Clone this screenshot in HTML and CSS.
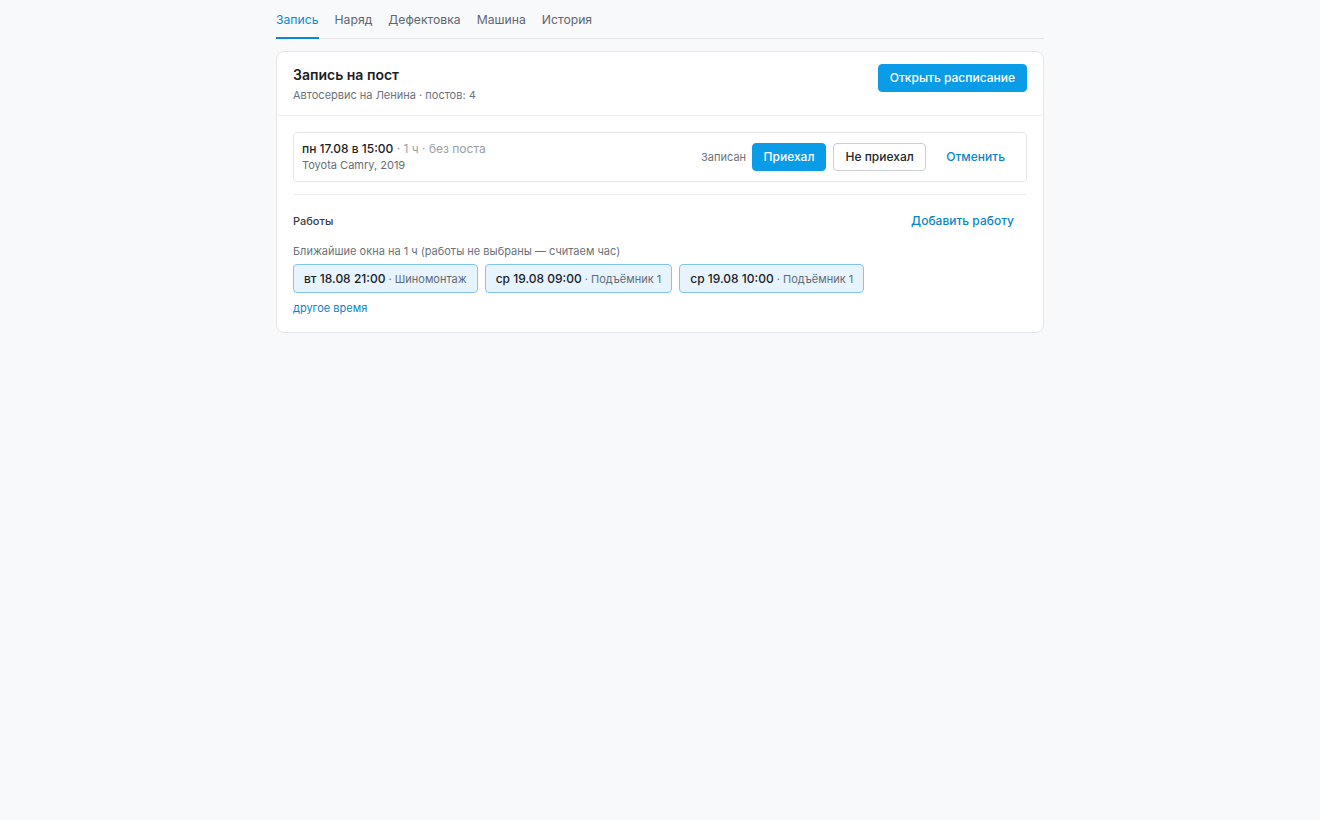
FILE: index.html
```html
<!DOCTYPE html>
<html lang="ru">
<head>
<meta charset="utf-8">
<title>Запись на пост</title>
<link rel="stylesheet" href="styles.css">
</head>
<body>
<div class="page">
  <nav class="tabs">
    <a class="tab active">Запись</a>
    <a class="tab">Наряд</a>
    <a class="tab">Дефектовка</a>
    <a class="tab">Машина</a>
    <a class="tab">История</a>
  </nav>

  <section class="card">
    <header class="card-head">
      <div class="head-text">
        <h1 class="title">Запись на пост</h1>
        <div class="subtitle">Автосервис на Ленина · постов: 4</div>
      </div>
      <button class="btn btn-primary">Открыть расписание</button>
    </header>

    <div class="card-body">
      <div class="booking">
        <div class="booking-info">
          <div class="booking-when"><b>пн 17.08 в 15:00</b><span class="muted"> · 1 ч · без поста</span></div>
          <div class="booking-car">Toyota Camry, 2019</div>
        </div>
        <div class="booking-actions">
          <span class="status">Записан</span>
          <button class="btn btn-primary">Приехал</button>
          <button class="btn btn-outline">Не приехал</button>
          <button class="btn btn-link">Отменить</button>
        </div>
      </div>

      <div class="works">
        <div class="works-head">
          <span class="works-title">Работы</span>
          <button class="btn btn-link">Добавить работу</button>
        </div>
        <div class="hint">Ближайшие окна на 1 ч (работы не выбраны — считаем час)</div>
        <div class="slots">
          <button class="slot"><b>вт 18.08 21:00</b><span class="slot-post"> · Шиномонтаж</span></button>
          <button class="slot"><b>ср 19.08 09:00</b><span class="slot-post"> · Подъёмник 1</span></button>
          <button class="slot"><b>ср 19.08 10:00</b><span class="slot-post"> · Подъёмник 1</span></button>
        </div>
        <a class="other-time">другое время</a>
      </div>
    </div>
  </section>
</div>
</body>
</html>
```

FILE: styles.css
```css
* { box-sizing: border-box; }

html, body {
  margin: 0;
  padding: 0;
  background: #f8f9fb;
  font-family: Inter, "Noto Sans", "Liberation Sans", sans-serif;
  color: #1f2328;
}

.page {
  width: 768px;
  margin: 0 auto;
}

/* tabs */
.tabs {
  display: flex;
  gap: 16px;
  border-bottom: 1px solid #e3e6ea;
}

.tab {
  display: block;
  padding: 12px 0 9px;
  font-size: 12.2px;
  line-height: 16px;
  color: #5e6670;
  border-bottom: 2px solid transparent;
  margin-bottom: -1px;
  cursor: pointer;
}

.tab.active {
  color: #0b88d2;
  border-bottom-color: #0b88d2;
}

/* card */
.card {
  margin-top: 12px;
  background: #fff;
  border: 1px solid #e4e7eb;
  border-radius: 8px;
}

.card-head {
  display: flex;
  justify-content: space-between;
  align-items: flex-start;
  padding: 12px 16px;
  border-bottom: 1px solid #eceef1;
}

.title {
  margin: 0;
  font-size: 14px;
  line-height: 21px;
  font-weight: 600;
  color: #1c2026;
}

.subtitle {
  margin-top: 2px;
  font-size: 11px;
  line-height: 16px;
  color: #6b727b;
}

.btn {
  font-family: inherit;
  font-size: 12px;
  line-height: 16px;
  height: 28px;
  padding: 0 12px;
  border-radius: 4px;
  border: 1px solid transparent;
  background: none;
  cursor: pointer;
  white-space: nowrap;
}

.btn-primary {
  background: #0b9ce8;
  border-color: #0b9ce8;
  color: #fff;
  font-weight: 500;
}

.card-head .btn-primary {
  padding: 0 11px;
}

.btn-outline {
  background: #fff;
  border-color: #c9ced4;
  color: #22272d;
  font-weight: 500;
}

.btn-link {
  color: #0b84c8;
  font-weight: 500;
}

.card-body {
  padding: 16px;
}

/* current booking */
.booking {
  display: flex;
  justify-content: space-between;
  align-items: center;
  padding: 8px 8px;
  border: 1px solid #e4e7eb;
  border-radius: 4px;
}

.booking-when {
  font-size: 12px;
  line-height: 16px;
}

.booking-when b {
  font-weight: 500;
  color: #1c2026;
}

.muted {
  color: #9aa0a7;
}

.booking-car {
  font-size: 11px;
  line-height: 16px;
  color: #666d76;
}

.booking-actions {
  display: flex;
  align-items: center;
  gap: 7px;
}

.booking-actions .btn-primary {
  padding: 0 10.5px;
}

.booking-actions .btn-outline {
  padding: 0 11.5px;
}

.status {
  font-size: 11px;
  color: #6b727b;
  margin-right: -1px;
}

/* works */
.works {
  margin-top: 12px;
  border-top: 1px solid #eceef1;
  padding-top: 12px;
}

.works-head {
  display: flex;
  justify-content: space-between;
  align-items: center;
}

.works-title {
  font-size: 11px;
  font-weight: 500;
  color: #3a4047;
}

.hint {
  margin-top: 8px;
  font-size: 11px;
  line-height: 16px;
  color: #6b727b;
}

.slots {
  display: flex;
  gap: 7px;
  margin-top: 5px;
}

.slot {
  font-family: inherit;
  height: 29px;
  padding: 0 10px;
  border: 1px solid #80c4ef;
  border-radius: 4px;
  background: #e7f4fd;
  font-size: 12px;
  line-height: 16px;
  cursor: pointer;
  white-space: nowrap;
}

.slot b {
  font-weight: 500;
  color: #18212b;
}

.slot-post {
  font-size: 11px;
  color: #5f6c78;
}

.other-time {
  display: block;
  margin-top: 7px;
  font-size: 11px;
  line-height: 16px;
  color: #0b84c8;
  cursor: pointer;
}
```
